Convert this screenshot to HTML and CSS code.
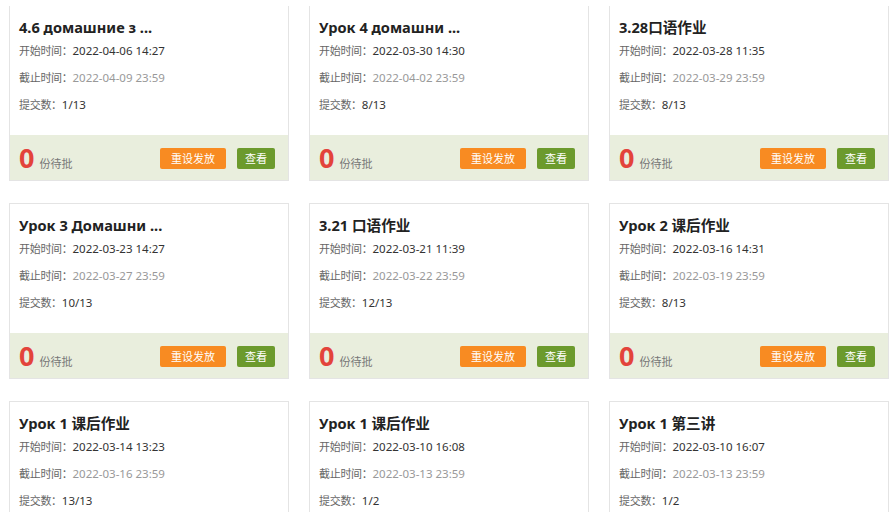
FILE: index.html
```html
<!DOCTYPE html>
<html lang="zh">
<head>
<meta charset="utf-8">
<title>作业列表</title>
<link rel="stylesheet" href="styles.css">
</head>
<body>
<div class="viewport">
<div class="grid">
  <div class="card">
    <div class="body">
      <div class="title">4.6 домашние з ...</div>
      <div class="line"><span class="lbl">开始时间：</span><span class="val">2022-04-06 14:27</span></div>
      <div class="line"><span class="lbl">截止时间：</span><span class="val dim">2022-04-09 23:59</span></div>
      <div class="line"><span class="lbl">提交数：</span><span class="val">1/13</span></div>
    </div>
    <div class="foot"><span class="num">0</span><span class="pend">份待批</span><span class="btn reset">重设发放</span><span class="btn view">查看</span></div>
  </div>
  <div class="card">
    <div class="body">
      <div class="title">Урок 4 домашни ...</div>
      <div class="line"><span class="lbl">开始时间：</span><span class="val">2022-03-30 14:30</span></div>
      <div class="line"><span class="lbl">截止时间：</span><span class="val dim">2022-04-02 23:59</span></div>
      <div class="line"><span class="lbl">提交数：</span><span class="val">8/13</span></div>
    </div>
    <div class="foot"><span class="num">0</span><span class="pend">份待批</span><span class="btn reset">重设发放</span><span class="btn view">查看</span></div>
  </div>
  <div class="card">
    <div class="body">
      <div class="title">3.28口语作业</div>
      <div class="line"><span class="lbl">开始时间：</span><span class="val">2022-03-28 11:35</span></div>
      <div class="line"><span class="lbl">截止时间：</span><span class="val dim">2022-03-29 23:59</span></div>
      <div class="line"><span class="lbl">提交数：</span><span class="val">8/13</span></div>
    </div>
    <div class="foot"><span class="num">0</span><span class="pend">份待批</span><span class="btn reset">重设发放</span><span class="btn view">查看</span></div>
  </div>
  <div class="card">
    <div class="body">
      <div class="title">Урок 3 Домашни ...</div>
      <div class="line"><span class="lbl">开始时间：</span><span class="val">2022-03-23 14:27</span></div>
      <div class="line"><span class="lbl">截止时间：</span><span class="val dim">2022-03-27 23:59</span></div>
      <div class="line"><span class="lbl">提交数：</span><span class="val">10/13</span></div>
    </div>
    <div class="foot"><span class="num">0</span><span class="pend">份待批</span><span class="btn reset">重设发放</span><span class="btn view">查看</span></div>
  </div>
  <div class="card">
    <div class="body">
      <div class="title">3.21 口语作业</div>
      <div class="line"><span class="lbl">开始时间：</span><span class="val">2022-03-21 11:39</span></div>
      <div class="line"><span class="lbl">截止时间：</span><span class="val dim">2022-03-22 23:59</span></div>
      <div class="line"><span class="lbl">提交数：</span><span class="val">12/13</span></div>
    </div>
    <div class="foot"><span class="num">0</span><span class="pend">份待批</span><span class="btn reset">重设发放</span><span class="btn view">查看</span></div>
  </div>
  <div class="card">
    <div class="body">
      <div class="title">Урок 2 课后作业</div>
      <div class="line"><span class="lbl">开始时间：</span><span class="val">2022-03-16 14:31</span></div>
      <div class="line"><span class="lbl">截止时间：</span><span class="val dim">2022-03-19 23:59</span></div>
      <div class="line"><span class="lbl">提交数：</span><span class="val">8/13</span></div>
    </div>
    <div class="foot"><span class="num">0</span><span class="pend">份待批</span><span class="btn reset">重设发放</span><span class="btn view">查看</span></div>
  </div>
  <div class="card">
    <div class="body">
      <div class="title">Урок 1 课后作业</div>
      <div class="line"><span class="lbl">开始时间：</span><span class="val">2022-03-14 13:23</span></div>
      <div class="line"><span class="lbl">截止时间：</span><span class="val dim">2022-03-16 23:59</span></div>
      <div class="line"><span class="lbl">提交数：</span><span class="val">13/13</span></div>
    </div>
    <div class="foot"><span class="num">0</span><span class="pend">份待批</span><span class="btn reset">重设发放</span><span class="btn view">查看</span></div>
  </div>
  <div class="card">
    <div class="body">
      <div class="title">Урок 1 课后作业</div>
      <div class="line"><span class="lbl">开始时间：</span><span class="val">2022-03-10 16:08</span></div>
      <div class="line"><span class="lbl">截止时间：</span><span class="val dim">2022-03-13 23:59</span></div>
      <div class="line"><span class="lbl">提交数：</span><span class="val">1/2</span></div>
    </div>
    <div class="foot"><span class="num">0</span><span class="pend">份待批</span><span class="btn reset">重设发放</span><span class="btn view">查看</span></div>
  </div>
  <div class="card">
    <div class="body">
      <div class="title">Урок 1 第三讲</div>
      <div class="line"><span class="lbl">开始时间：</span><span class="val">2022-03-10 16:07</span></div>
      <div class="line"><span class="lbl">截止时间：</span><span class="val dim">2022-03-13 23:59</span></div>
      <div class="line"><span class="lbl">提交数：</span><span class="val">1/2</span></div>
    </div>
    <div class="foot"><span class="num">0</span><span class="pend">份待批</span><span class="btn reset">重设发放</span><span class="btn view">查看</span></div>
  </div>
</div>
</div>
</body>
</html>
```

FILE: styles.css
```css
html, body {
  margin: 0;
  padding: 0;
  background: #ffffff;
  overflow: hidden;
}
body {
  font-family: "Noto Sans", "Noto Sans CJK SC", sans-serif;
  color: #333;
  padding: 0 0 0 9px;
}
.viewport {
  height: 506px;
  margin-top: 6px;
  overflow: hidden;
}
.grid {
  display: grid;
  grid-template-columns: repeat(3, 280px);
  column-gap: 20px;
  row-gap: 22px;
  margin-top: -1px;
}
.card {
  border: 1px solid #e4e4e4;
  background: #fff;
}
.body {
  height: 129px;
  box-sizing: border-box;
  padding: 11px 9px 0 9px;
}
.title {
  font-size: 14.6px;
  font-weight: 700;
  line-height: 20px;
  color: #222;
  white-space: nowrap;
}
.line {
  font-size: 11px;
  line-height: 27px;
  white-space: nowrap;
}
.lbl {
  color: #666;
  letter-spacing: -0.3px;
}
.val {
  color: #333;
  font-size: 11.5px;
}
.val.dim {
  color: #999;
}
.foot {
  height: 45px;
  background: #e9eedd;
  display: flex;
  align-items: center;
  padding: 0 13px 0 9px;
}
.num {
  color: #e3433b;
  font-size: 27px;
  font-weight: 700;
  line-height: 30px;
  font-family: "Open Sans", "Noto Sans", sans-serif;
}
.pend {
  font-size: 11px;
  color: #777;
  margin-left: 5px;
  margin-top: 10px;
  flex: 1;
}
.btn {
  height: 21px;
  line-height: 21px;
  font-size: 11px;
  color: #fff;
  border-radius: 2px;
  text-align: center;
  margin-top: 2px;
}
.reset {
  width: 66px;
  background: #f88b22;
}
.view {
  width: 38px;
  background: #6c9a2d;
  margin-left: 11px;
}
```
